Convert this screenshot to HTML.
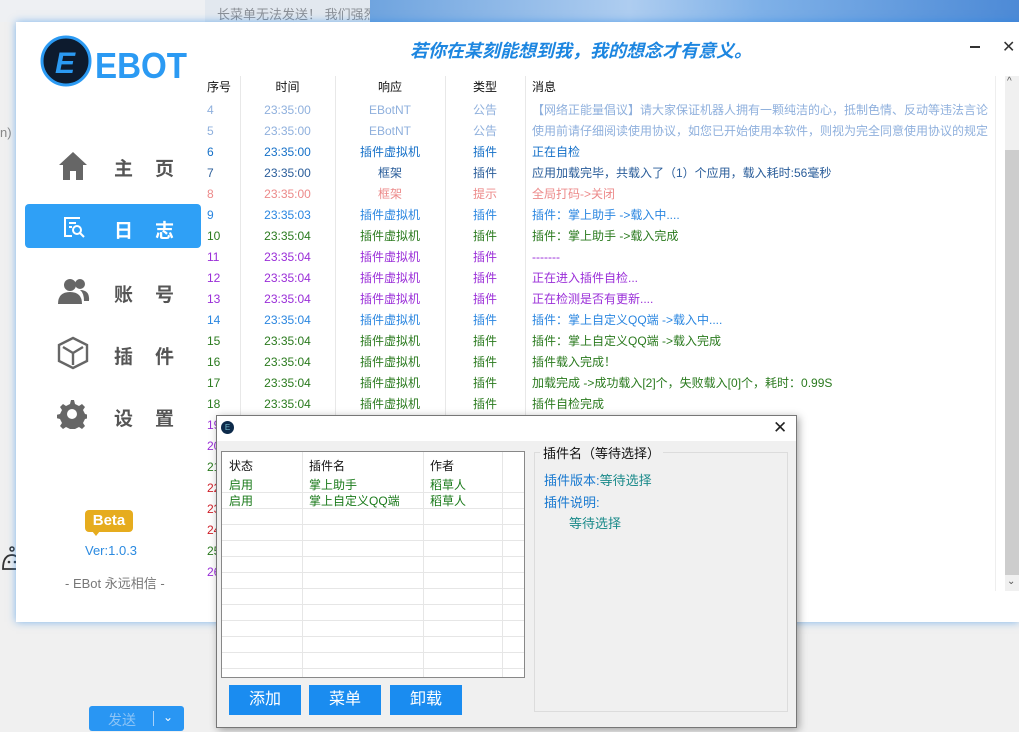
<!DOCTYPE html>
<html><head><meta charset="utf-8"><style>
*{margin:0;padding:0;box-sizing:border-box}
body{width:1019px;height:732px;overflow:hidden;background:#f0f0f0;font-family:"Liberation Sans","Microsoft YaHei","Noto Sans CJK SC",sans-serif;position:relative}
.abs{position:absolute}
.top1{left:0;top:0;width:205px;height:22px;background:#eef0f3}
.top2{left:205px;top:0;width:165px;height:22px;background:#e2e8ef;color:#8a8f96;font-size:13px;padding:4px 0 0 12px;white-space:nowrap;overflow:hidden}
.top3{left:370px;top:0;width:649px;height:22px;background:linear-gradient(90deg,#6fa4df,#aecdf0 40%,#7fb1e8 60%,#4d8ad6)}
.win{left:16px;top:22px;width:1003px;height:600px;background:#fff;box-shadow:0 0 8px rgba(30,130,230,.55)}
.nav{font-size:19px;font-weight:bold;color:#555;letter-spacing:22px}
.row{position:absolute;left:0;height:21px;font-size:12px;line-height:21px;white-space:nowrap}
.row span{position:absolute}
.c1{left:207px}.c2{left:240px;width:95px;text-align:center}.c3{left:335px;width:110px;text-align:center}.c4{left:445px;width:80px;text-align:center}.c5{left:532px}
.sep{position:absolute;top:76px;width:1px;height:340px;background:#e8e8e8}
.btn{position:absolute;top:685px;width:72px;height:30px;background:#1a8cf0;color:#fff;font-size:16px;text-align:center;line-height:30px}
.tr{position:absolute;left:222px;width:302px;height:16px;border-bottom:1px solid #e6e6e6;font-size:12px;color:#1a7a1a;line-height:16px}
</style></head><body>
<div class="abs top1"></div>
<div class="abs top2">长菜单无法发送！ 我们强烈</div>
<div class="abs top3"></div>
<div class="abs" style="left:0;top:125px;font-size:13px;color:#888">n)</div>
<svg class="abs" style="left:0;top:545px" width="20" height="26"><circle cx="12" cy="4" r="2" fill="none" stroke="#333" stroke-width="1.5"/><path d="M3 24 Q3 10 12 10 Q20 10 20 24 Z" fill="none" stroke="#333" stroke-width="1.8"/><circle cx="9" cy="17" r="1.3" fill="#333"/><circle cx="15" cy="17" r="1.3" fill="#333"/></svg>
<div class="abs" style="left:89px;top:706px;width:95px;height:25px;background:#2996f3;border-radius:3px"></div>
<div class="abs" style="left:108px;top:710px;color:#8cc4f6;font-size:14px">发送</div>
<div class="abs" style="left:153px;top:711px;width:1px;height:15px;background:#a8d2fa"></div>
<div class="abs" style="left:163px;top:710px;color:#fff;font-size:12px">⌄</div>

<div class="abs win"></div>
<!-- logo -->
<svg class="abs" style="left:40px;top:35px" width="150" height="52">
<circle cx="26" cy="26" r="24" fill="#0d1b2e" stroke="#2b9af3" stroke-width="3"/>
<text x="15" y="38" font-family="Liberation Sans" font-weight="bold" font-style="italic" font-size="30" fill="#2b9af3">E</text>
<text x="55" y="43" font-family="Liberation Sans" font-weight="bold" font-size="36" fill="#2b9af3" textLength="92" lengthAdjust="spacingAndGlyphs">EBOT</text>
</svg>
<div class="abs" style="left:410px;top:37px;font-size:18px;font-style:italic;font-weight:bold;color:#1d86e0">若你在某刻能想到我，我的想念才有意义。</div>
<div class="abs" style="left:970px;top:46px;width:10px;height:2px;background:#333"></div>
<div class="abs" style="left:1002px;top:37px;font-size:16px;color:#333">✕</div>

<!-- nav -->
<svg class="abs" style="left:58px;top:151px" width="30" height="30"><path d="M15 1 L1 14 L5 14 L5 29 L12 29 L12 20 L18 20 L18 29 L25 29 L25 14 L29 14 Z" fill="#666"/></svg>
<div class="abs nav" style="left:114px;top:154px">主页</div>
<div class="abs" style="left:25px;top:204px;width:176px;height:44px;background:#2fa0f6;border-radius:4px"></div>
<svg class="abs" style="left:62px;top:215px" width="24" height="24"><path d="M18 3 H3 V21 H10" fill="none" stroke="#fff" stroke-width="2"/><path d="M7 8 H14 M7 12 H10" stroke="#fff" stroke-width="2"/><circle cx="15" cy="15" r="4" fill="none" stroke="#fff" stroke-width="2"/><path d="M18 18 L22 22" stroke="#fff" stroke-width="2"/></svg>
<div class="abs nav" style="left:114px;top:216px;color:#fff">日志</div>
<svg class="abs" style="left:58px;top:277px" width="32" height="28"><circle cx="12" cy="8" r="6" fill="#666"/><path d="M0 27 Q0 15 12 15 Q24 15 24 27 Z" fill="#666"/><circle cx="22" cy="7" r="5" fill="#666"/><path d="M22 13 Q32 13 31 24 L26 24 Q26 16 22 13Z" fill="#666"/></svg>
<div class="abs nav" style="left:114px;top:280px">账号</div>
<svg class="abs" style="left:57px;top:336px" width="32" height="34"><path d="M16 2 L30 9 V25 L16 32 L2 25 V9 Z" fill="none" stroke="#666" stroke-width="2.4"/><path d="M6 11 L16 17 L26 11 M16 17 V29" fill="none" stroke="#666" stroke-width="2.4"/></svg>
<div class="abs nav" style="left:114px;top:342px">插件</div>
<svg class="abs" style="left:57px;top:399px" width="30" height="30"><path d="M15 1 l3 0 1 4 4 2 3-2 3 3-2 3 2 4 4 1 0 3-4 1-2 4 2 3-3 3-3-2-4 2-1 4-3 0-1-4-4-2-3 2-3-3 2-3-2-4-4-1 0-3 4-1 2-4-2-3 3-3 3 2 4-2z" fill="#666" transform="translate(-1 0)"/><circle cx="15" cy="15" r="5" fill="#fff"/></svg>
<div class="abs nav" style="left:114px;top:404px">设置</div>
<div class="abs" style="left:85px;top:510px;width:48px;height:22px;background:#e6ac1e;border-radius:4px;color:#fff;font-weight:bold;font-size:15px;text-align:center;line-height:22px">Beta</div>
<div class="abs" style="left:92px;top:531px;width:0;height:0;border-left:4px solid transparent;border-right:4px solid transparent;border-top:5px solid #e6ac1e"></div>
<div class="abs" style="left:85px;top:543px;font-size:13px;color:#2b8ae0">Ver:1.0.3</div>
<div class="abs" style="left:65px;top:573px;font-size:13px;color:#777">- EBot 永远相信 -</div>

<!-- table -->
<div class="sep" style="left:240px"></div><div class="sep" style="left:335px"></div><div class="sep" style="left:445px"></div><div class="sep" style="left:525px"></div>
<div class="abs" style="left:995px;top:76px;width:1px;height:515px;background:#eee"></div>
<div class="abs" style="left:1005px;top:76px;width:14px;height:515px;background:#f0f0f0"></div>
<div class="abs" style="left:1005px;top:150px;width:14px;height:425px;background:#cdcdcd"></div>
<div class="abs" style="left:1007px;top:76px;font-size:10px;color:#555">^</div>
<div class="abs" style="left:1007px;top:576px;font-size:10px;color:#555">⌄</div>
<div class="row" style="top:77px;color:#111"><span class="c1">序号</span><span class="c2">时间</span><span class="c3">响应</span><span class="c4">类型</span><span class="c5">消息</span></div>
<div class="row" style="top:100px;color:#8fb0dd"><span class="c1">4</span><span class="c2">23:35:00</span><span class="c3">EBotNT</span><span class="c4">公告</span><span class="c5">【网络正能量倡议】请大家保证机器人拥有一颗纯洁的心，抵制色情、反动等违法言论</span></div>
<div class="row" style="top:121px;color:#8fb0dd"><span class="c1">5</span><span class="c2">23:35:00</span><span class="c3">EBotNT</span><span class="c4">公告</span><span class="c5">使用前请仔细阅读使用协议，如您已开始使用本软件，则视为完全同意使用协议的规定</span></div>
<div class="row" style="top:142px;color:#1570c8"><span class="c1">6</span><span class="c2">23:35:00</span><span class="c3">插件虚拟机</span><span class="c4">插件</span><span class="c5">正在自检</span></div>
<div class="row" style="top:163px;color:#2a5d9a"><span class="c1">7</span><span class="c2">23:35:00</span><span class="c3">框架</span><span class="c4">插件</span><span class="c5">应用加载完毕，共载入了（1）个应用，载入耗时:56毫秒</span></div>
<div class="row" style="top:184px;color:#ec8a8a"><span class="c1">8</span><span class="c2">23:35:00</span><span class="c3">框架</span><span class="c4">提示</span><span class="c5">全局打码->关闭</span></div>
<div class="row" style="top:205px;color:#2a86e0"><span class="c1">9</span><span class="c2">23:35:03</span><span class="c3">插件虚拟机</span><span class="c4">插件</span><span class="c5">插件：掌上助手 ->载入中....</span></div>
<div class="row" style="top:226px;color:#2a7a1e"><span class="c1">10</span><span class="c2">23:35:04</span><span class="c3">插件虚拟机</span><span class="c4">插件</span><span class="c5">插件：掌上助手 ->载入完成</span></div>
<div class="row" style="top:247px;color:#9a2ed8"><span class="c1">11</span><span class="c2">23:35:04</span><span class="c3">插件虚拟机</span><span class="c4">插件</span><span class="c5">-------</span></div>
<div class="row" style="top:268px;color:#9a2ed8"><span class="c1">12</span><span class="c2">23:35:04</span><span class="c3">插件虚拟机</span><span class="c4">插件</span><span class="c5">正在进入插件自检...</span></div>
<div class="row" style="top:289px;color:#9a2ed8"><span class="c1">13</span><span class="c2">23:35:04</span><span class="c3">插件虚拟机</span><span class="c4">插件</span><span class="c5">正在检测是否有更新....</span></div>
<div class="row" style="top:310px;color:#2a86e0"><span class="c1">14</span><span class="c2">23:35:04</span><span class="c3">插件虚拟机</span><span class="c4">插件</span><span class="c5">插件：掌上自定义QQ端 ->载入中....</span></div>
<div class="row" style="top:331px;color:#2a7a1e"><span class="c1">15</span><span class="c2">23:35:04</span><span class="c3">插件虚拟机</span><span class="c4">插件</span><span class="c5">插件：掌上自定义QQ端 ->载入完成</span></div>
<div class="row" style="top:352px;color:#2a7a1e"><span class="c1">16</span><span class="c2">23:35:04</span><span class="c3">插件虚拟机</span><span class="c4">插件</span><span class="c5">插件载入完成！</span></div>
<div class="row" style="top:373px;color:#2a7a1e"><span class="c1">17</span><span class="c2">23:35:04</span><span class="c3">插件虚拟机</span><span class="c4">插件</span><span class="c5">加载完成 ->成功载入[2]个，失败载入[0]个，耗时：0.99S</span></div>
<div class="row" style="top:394px;color:#2a7a1e"><span class="c1">18</span><span class="c2">23:35:04</span><span class="c3">插件虚拟机</span><span class="c4">插件</span><span class="c5">插件自检完成</span></div>
<div class="row" style="top:415px;color:#9a2ed8"><span class="c1">19</span></div>
<div class="row" style="top:436px;color:#9a2ed8"><span class="c1">20</span></div>
<div class="row" style="top:457px;color:#2a7a1e"><span class="c1">21</span></div>
<div class="row" style="top:478px;color:#d0202a"><span class="c1">22</span></div>
<div class="row" style="top:499px;color:#d0202a"><span class="c1">23</span></div>
<div class="row" style="top:520px;color:#d0202a"><span class="c1">24</span></div>
<div class="row" style="top:541px;color:#2a7a1e"><span class="c1">25</span></div>
<div class="row" style="top:562px;color:#9a2ed8"><span class="c1">26</span></div>

<!-- dialog -->
<div class="abs" style="left:216px;top:415px;width:581px;height:313px;background:#f0f0f0;border:1px solid #777;box-shadow:2px 2px 8px rgba(0,0,0,.35)"></div>
<div class="abs" style="left:217px;top:416px;width:579px;height:25px;background:#fff"></div>
<div class="abs" style="left:221px;top:421px;width:13px;height:13px;border-radius:50%;background:#0d2a4a;color:#7bc;font-size:8px;text-align:center;line-height:13px">E</div>
<div class="abs" style="left:773px;top:418px;font-size:17px;color:#222">✕</div>
<div class="abs" style="left:221px;top:451px;width:304px;height:227px;background:#fff;border:1px solid #888"></div>
<div class="abs" style="left:302px;top:452px;width:1px;height:225px;background:#e6e6e6"></div>
<div class="abs" style="left:423px;top:452px;width:1px;height:225px;background:#e6e6e6"></div>
<div class="abs" style="left:502px;top:452px;width:1px;height:225px;background:#e6e6e6"></div>
<div class="abs" style="left:229px;top:457px;font-size:12px;color:#111">状态</div>
<div class="abs" style="left:309px;top:457px;font-size:12px;color:#111">插件名</div>
<div class="abs" style="left:430px;top:457px;font-size:12px;color:#111">作者</div>
<div class="tr" style="top:477px"><span class="abs" style="left:7px">启用</span><span class="abs" style="left:87px">掌上助手</span><span class="abs" style="left:208px">稻草人</span></div>
<div class="tr" style="top:493px"><span class="abs" style="left:7px">启用</span><span class="abs" style="left:87px">掌上自定义QQ端</span><span class="abs" style="left:208px">稻草人</span></div>
<div class="tr" style="top:509px"></div><div class="tr" style="top:525px"></div><div class="tr" style="top:541px"></div><div class="tr" style="top:557px"></div><div class="tr" style="top:573px"></div><div class="tr" style="top:589px"></div><div class="tr" style="top:605px"></div><div class="tr" style="top:621px"></div><div class="tr" style="top:637px"></div><div class="tr" style="top:653px"></div>
<div class="btn" style="left:229px">添加</div>
<div class="btn" style="left:309px">菜单</div>
<div class="btn" style="left:390px">卸载</div>
<div class="abs" style="left:534px;top:452px;width:254px;height:260px;border:1px solid #dcdcdc"></div>
<div class="abs" style="left:540px;top:443px;background:#f0f0f0;padding:0 3px;font-size:13px;color:#111">插件名（等待选择）</div>
<div class="abs" style="left:544px;top:470px;font-size:13px;color:#1a7ad0">插件版本:<span style="color:#1a8a8a">等待选择</span></div>
<div class="abs" style="left:544px;top:492px;font-size:13px;color:#1a7ad0">插件说明:</div>
<div class="abs" style="left:569px;top:513px;font-size:13px;color:#1a8a8a">等待选择</div>
</body></html>
